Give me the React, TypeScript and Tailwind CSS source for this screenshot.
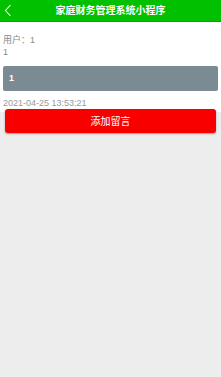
export default function App() {
  return (
    <div
      className="w-[221px] h-[377px] bg-[#ededed] flex flex-col"
      style={{ fontFamily: '"Liberation Sans", "Noto Sans CJK SC", sans-serif' }}
    >
      <div className="h-[22px] bg-[#00c000] border-b border-[#00a800] flex items-center relative shrink-0">
        <svg className="absolute left-[4px] top-[4px]" width="8" height="13" viewBox="0 0 8 13">
          <path d="M6.5 1 L1.5 6.5 L6.5 12" fill="none" stroke="#fff" strokeWidth="1.1" />
        </svg>
        <div className="flex-1 text-center text-white text-[10px] font-bold">家庭财务管理系统小程序</div>
      </div>
      <div className="bg-white h-[90px] px-[3px] pt-[12px] text-[#888] text-[9px] shrink-0">
        <div className="leading-[12px]">用户：1</div>
        <div className="leading-[12px]">1</div>
        <div className="mt-[8px] h-[25px] bg-[#7a8b94] rounded-[2px] flex items-center px-[6px] text-white text-[9px] font-bold">
          1
        </div>
        <div className="mt-[6px] leading-[12px] text-[9px] text-[#999]">2021-04-25 13:53:21</div>
      </div>
      <div className="-mt-[3px] mx-[5px] h-[24px] bg-[#f80000] rounded-[3px] shadow-[0_1px_2px_rgba(0,0,0,0.35)] flex items-center justify-center text-white text-[10px]">
        添加留言
      </div>
    </div>
  );
}
